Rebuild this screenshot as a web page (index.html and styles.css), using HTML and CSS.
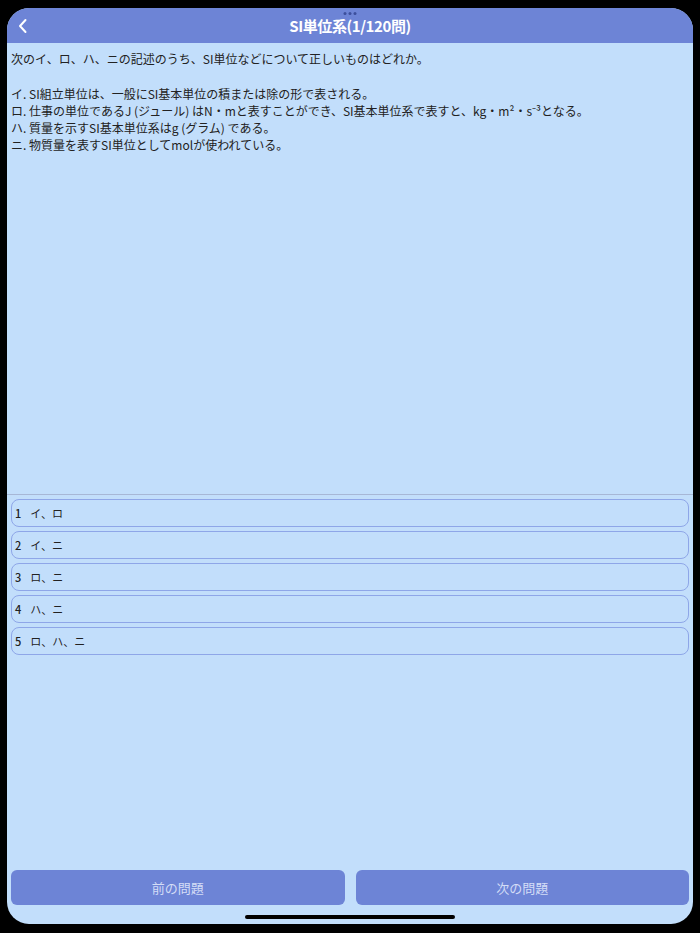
FILE: index.html
```html
<!DOCTYPE html>
<html lang="ja">
<head>
<meta charset="utf-8">
<link rel="stylesheet" href="styles.css">
</head>
<body>
<div class="device">
  <header class="topbar">
    <span class="dots"><i></i><i></i><i></i></span>
    <svg class="back" width="12" height="16" viewBox="0 0 12 16"><path d="M8.5 2 L3 8 L8.5 14" fill="none" stroke="#fff" stroke-width="2" stroke-linecap="round" stroke-linejoin="round"/></svg>
    <h1 class="title">SI単位系(1/120問)</h1>
  </header>
  <section class="question">
    <p>次のイ、ロ、ハ、ニの記述のうち、SI単位などについて正しいものはどれか。</p>
    <p class="blank">&nbsp;</p>
    <p>イ. SI組立単位は、一般にSI基本単位の積または除の形で表される。</p>
    <p>ロ. 仕事の単位であるJ (ジュール) はN・mと表すことができ、SI基本単位系で表すと、kg・m²・s⁻³となる。</p>
    <p>ハ. 質量を示すSI基本単位系はg (グラム) である。</p>
    <p>ニ. 物質量を表すSI単位としてmolが使われている。</p>
  </section>
  <section class="choices">
    <div class="choice"><span class="num">1</span><span>イ、ロ</span></div>
    <div class="choice"><span class="num">2</span><span>イ、ニ</span></div>
    <div class="choice"><span class="num">3</span><span>ロ、ニ</span></div>
    <div class="choice"><span class="num">4</span><span>ハ、ニ</span></div>
    <div class="choice"><span class="num">5</span><span>ロ、ハ、ニ</span></div>
  </section>
  <footer class="nav">
    <button class="navbtn">前の問題</button>
    <button class="navbtn">次の問題</button>
  </footer>
  <div class="home"></div>
</div>
</body>
</html>
```

FILE: styles.css
```css
* { box-sizing: border-box; margin: 0; padding: 0; }
html, body { width: 700px; height: 933px; background: #000; overflow: hidden; }
body {
  padding: 8px 7px 9px 7px;
  font-family: "Noto Sans CJK JP", "Noto Sans", sans-serif;
  color: #222;
}
.device {
  height: 100%;
  background: #c2defb;
  border-radius: 22px;
  overflow: hidden;
  display: flex;
  flex-direction: column;
}
.topbar {
  position: relative;
  height: 35px;
  background: #6d84d6;
  display: flex;
  align-items: center;
  justify-content: center;
  flex-shrink: 0;
}
.dots {
  position: absolute;
  top: 4px;
  left: 50%;
  transform: translateX(-50%);
  display: flex;
  gap: 2px;
}
.dots i { width: 3px; height: 3px; border-radius: 50%; background: #3c4f9c; display: block; }
.back { position: absolute; left: 10px; top: 10px; }
.title {
  color: #fff;
  font-size: 15px;
  font-weight: 700;
  letter-spacing: -0.4px;
  line-height: 20px;
}
.question {
  height: 452px;
  padding: 7px 4px 0 4px;
  font-size: 12px;
  line-height: 17px;
  border-bottom: 1.5px solid #a7b7d6;
  flex-shrink: 0;
}
.question .blank { height: 18px; }
.choices {
  padding: 4px 4px 0 4px;
  display: flex;
  flex-direction: column;
  gap: 4px;
}
.choice {
  height: 28px;
  border: 1px solid #8ea6e8;
  border-radius: 8px;
  display: flex;
  align-items: center;
  padding-left: 3px;
  font-size: 11px;
  gap: 9px;
  color: #222;
}
.num { font-weight: 500; }
.nav {
  margin-top: auto;
  padding: 0 4px;
  display: flex;
  gap: 11px;
}
.navbtn {
  flex: 1;
  height: 35px;
  border: none;
  border-radius: 6px;
  background: #6d84d6;
  color: #d4ddf6;
  font-family: "Noto Sans CJK JP", "Noto Sans", sans-serif;
  font-size: 13px;
}
.home {
  width: 210px;
  height: 4px;
  border-radius: 2px;
  background: #000;
  margin: 10px auto 5px;
}
```
